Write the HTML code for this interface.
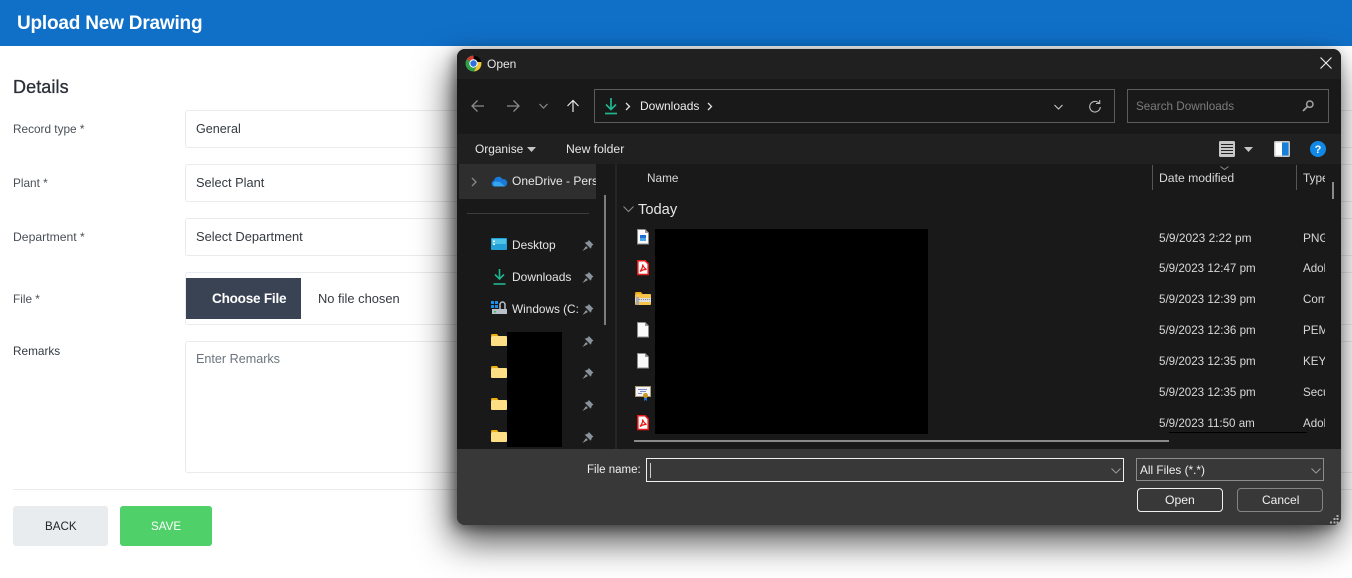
<!DOCTYPE html>
<html><head><meta charset="utf-8"><style>
html,body{margin:0;padding:0;width:1352px;height:578px;overflow:hidden;background:#fff;font-family:"Liberation Sans",sans-serif}
div,span{position:absolute;white-space:nowrap;box-sizing:border-box}
svg{position:absolute;overflow:visible}
.lb{left:13px;font-size:11.8px;color:#495057;line-height:14px}
.fd{left:185px;width:1200px;border:1px solid #e9ebee;border-radius:3px;background:#fff}
.vt{left:196px;font-size:12.8px;color:#343a40;line-height:16px}
.d{font-size:11.8px;color:#e6e6e6;line-height:16px}
.dt{left:1159px;font-size:11.6px;color:#d8d8d8;line-height:16px}
.ty{left:1303px;width:22px;overflow:hidden;font-size:11.6px;color:#d8d8d8;line-height:16px}
</style></head><body>
<div style="left:0;top:0;width:1352px;height:46px;background:#1070c8"></div>
<div style="left:17px;top:12px;font-size:19px;font-weight:bold;color:#fff;line-height:24px;letter-spacing:-.2px">Upload New Drawing</div>
<div style="left:13px;top:76px;font-size:18px;color:#2b3038;line-height:22px;-webkit-text-stroke:.3px #2b3038;letter-spacing:.1px">Details</div>

<div class="lb" style="top:122px">Record type *</div>
<div class="fd" style="top:110px;height:38px"></div><div class="vt" style="top:121px;font-size:12.6px">General</div>
<div class="lb" style="top:176px">Plant *</div>
<div class="fd" style="top:164px;height:38px"></div><div class="vt" style="top:175px">Select Plant</div>
<div class="lb" style="top:230px;font-size:12.2px">Department *</div>
<div class="fd" style="top:218px;height:38px"></div><div class="vt" style="top:229px;font-size:12.9px">Select Department</div>
<div class="lb" style="top:292px">File *</div>
<div class="fd" style="top:272px;height:53px"></div>
<div style="left:186px;top:278px;width:115px;height:41px;background:#3a4354"></div>
<div style="left:212px;top:291px;font-size:13.6px;font-weight:bold;color:#fff;line-height:16px;letter-spacing:-.25px">Choose File</div>
<div class="vt" style="left:318px;top:291px;font-size:12.9px">No file chosen</div>
<div class="lb" style="top:344px;color:#343a40">Remarks</div>
<div class="fd" style="top:341px;height:132px"></div><div class="vt" style="top:351px;color:#6c757d;font-size:12.6px">Enter Remarks</div>
<div style="left:13px;top:489px;width:1339px;height:1px;background:#e9ebee"></div>
<div style="left:13px;top:506px;width:95px;height:40px;background:#e9ecee;border-radius:3px"></div>
<div style="left:45px;top:520px;font-size:11.6px;color:#212529;line-height:14px">BACK</div>
<div style="left:120px;top:506px;width:92px;height:40px;background:#4fd069;border-radius:3px"></div>
<div style="left:151px;top:520px;font-size:11.6px;color:#fff;line-height:14px">SAVE</div>

<!-- dialog -->
<div style="left:457px;top:49px;width:884px;height:476px;border-radius:8px;background:#191919;box-shadow:-5px 16px 36px rgba(0,0,0,.7),-3px 3px 12px rgba(0,0,0,.4);overflow:hidden">
<div style="left:0;top:0;width:884px;height:30px;background:#202020"></div>
<div style="left:0;top:85px;width:884px;height:30px;background:#202020"></div>
<div style="left:0;top:400px;width:884px;height:76px;background:#383838"></div>
<div style="left:2px;top:115px;width:137px;height:35px;background:#2e2e2e"></div>
<div style="left:158px;top:115px;width:2px;height:285px;background:#252525"></div>
</div>

<!-- title -->
<svg style="left:465px;top:55px" width="17" height="17" viewBox="0 0 17 17"><circle cx="8.5" cy="8.5" r="8" fill="#2f9e44"/><path d="M1.7 4.8A8 8 0 0 1 12 1.3L8.5 5.5H4z" fill="#d83a32"/><path d="M16.2 7A8 8 0 0 1 9 16.5l3-5.5L11.5 6z" fill="#f4c430"/><path d="M8.5 .5A8 8 0 0 1 16.4 7H9z" fill="#000"/><circle cx="8.5" cy="8.5" r="4.2" fill="#fff"/><circle cx="8.5" cy="8.5" r="3.2" fill="#2f6fe0"/></svg>
<div class="d" style="left:487px;top:56px;font-size:12px">Open</div>
<svg style="left:1320px;top:57px" width="12" height="12" viewBox="0 0 12 12"><path d="M.5.5l11 11M11.5.5l-11 11" stroke="#f0f0f0" stroke-width="1.1" fill="none"/></svg>

<!-- nav -->
<svg style="left:471px;top:99px" width="100" height="14" viewBox="0 0 100 14" fill="none"><path d="M13 7H1M6.500 1.500L1 7l5.500 5.500" stroke="#8a8a8a" stroke-width="1.3"/><path d="M36 7h12M42.500 1.500L48 7l-5.500 5.500" stroke="#8a8a8a" stroke-width="1.3"/><path d="M68.500 5l4 4 4-4" stroke="#8a8a8a" stroke-width="1.2"/><path d="M102 13V1.500M96.500 7L102 1.500 107.500 7" stroke="#e8e8e8" stroke-width="1.2"/></svg>
<div style="left:594px;top:89px;width:521px;height:34px;border:1px solid #5c5c5c"></div>
<svg style="left:604px;top:98px" width="14" height="17" viewBox="0 0 14 17" fill="none"><path d="M7 0v11M2 6.500l5 5 5-5" stroke="#1fb58f" stroke-width="1.7"/><path d="M1 15.500h12" stroke="#1fb58f" stroke-width="1.700"/></svg>
<svg style="left:625px;top:102px" width="6" height="9" viewBox="0 0 6 9"><path d="M1 1l3.500 3.500L1 8" stroke="#e0e0e0" stroke-width="1.3" fill="none"/></svg>
<div class="d" style="left:640px;top:98px;color:#ededed;font-size:12px">Downloads</div>
<svg style="left:707px;top:102px" width="6" height="9" viewBox="0 0 6 9"><path d="M1 1l3.500 3.500L1 8" stroke="#e0e0e0" stroke-width="1.3" fill="none"/></svg>
<svg style="left:1054px;top:104px" width="9" height="6" viewBox="0 0 9 6"><path d="M.5 1l4 4 4-4" stroke="#d0d0d0" fill="none"/></svg>
<svg style="left:1089px;top:100px" width="12" height="13" viewBox="0 0 12 13" fill="none"><path d="M10 3.200A5.300 5.300 0 1 0 11.300 7" stroke="#bdbdbd" stroke-width="1.100"/><path d="M7 3.500h3.700V0" stroke="#bdbdbd" stroke-width="1.100"/></svg>
<div style="left:1127px;top:89px;width:202px;height:34px;border:1px solid #5c5c5c"></div>
<div class="d" style="left:1136px;top:99px;color:#7c7c7c;font-size:11.7px">Search Downloads</div>
<svg style="left:1302px;top:100px" width="12" height="12" viewBox="0 0 12 12" fill="none"><circle cx="7.800" cy="4.200" r="3.200" stroke="#a0a0a0" stroke-width="1.500"/><path d="M5.500 6.500L1 11" stroke="#a0a0a0" stroke-width="1.800"/></svg>

<!-- command bar -->
<div class="d" style="left:475px;top:141px;font-size:11.9px">Organise</div>
<svg style="left:527px;top:147px" width="9" height="5" viewBox="0 0 9 5"><path d="M0 0h9L4.500 5z" fill="#c4c4c4"/></svg>
<div class="d" style="left:566px;top:141px;font-size:12.2px">New folder</div>
<svg style="left:1219px;top:141px" width="16" height="16" viewBox="0 0 16 16"><rect width="16" height="16" rx="1.500" fill="#c8c8c8"/><path d="M2 3.500h12M2 6.500h12M2 9.500h12M2 12.500h12" stroke="#222" stroke-width="1"/></svg>
<svg style="left:1244px;top:147px" width="9" height="5" viewBox="0 0 9 5"><path d="M0 0h9L4.500 5z" fill="#c4c4c4"/></svg>
<svg style="left:1274px;top:141px" width="16" height="16" viewBox="0 0 16 16"><rect width="16" height="16" rx="1.500" fill="#c8c8c8"/><rect x="1.500" y="1.500" width="13" height="13" fill="#fff"/><rect x="8" y="1.500" width="6.500" height="13" fill="#1680d8"/></svg>
<svg style="left:1310px;top:141px" width="16" height="16" viewBox="0 0 16 16"><circle cx="8" cy="8" r="8" fill="#1288e6"/><text x="8" y="12" text-anchor="middle" font-family="Liberation Sans" font-size="11" font-weight="bold" fill="#fff">?</text></svg>

<!-- left nav -->
<svg style="left:471px;top:177px" width="6" height="10" viewBox="0 0 6 10"><path d="M1 1l4 4-4 4" stroke="#888" stroke-width="1.300" fill="none"/></svg>
<svg style="left:491px;top:175px" width="17" height="12" viewBox="0 0 17 12"><path d="M3.500 11.500A3 3 0 0 1 3 5.600 4.500 4.500 0 0 1 11.500 4.300 3.700 3.700 0 0 1 13.500 11.500z" fill="#1a7ad8"/><path d="M3.500 11.500A2.800 2.800 0 0 1 4 6.500L9 7l5 4.500z" fill="#35a6ee"/></svg>
<div style="left:512px;top:173px;width:84px;overflow:hidden;font-size:12px;color:#e6e6e6;line-height:16px">OneDrive - Personal</div>
<div style="left:467px;top:213px;width:122px;height:1px;background:#3c3c3c"></div>
<div style="left:604px;top:195px;width:2px;height:130px;background:#7d7d7d"></div>
<div style="left:1332px;top:182px;width:2px;height:17px;background:#8a8a8a"></div>

<svg style="left:491px;top:238px" width="16" height="13" viewBox="0 0 16 13"><rect width="16" height="12" rx="1" fill="#23a0d6"/><rect x="1" y="1" width="14" height="5" fill="#4fc3e8"/><rect x="2" y="2.500" width="2" height="1.500" fill="#fff"/><rect x="2" y="5.500" width="2" height="1.500" fill="#fff"/></svg>
<div class="d" style="left:512px;top:237px;font-size:11.9px">Desktop</div>
<svg style="left:493px;top:269px" width="13" height="16" viewBox="0 0 13 16" fill="none"><path d="M6.500 0v10M2 5.500l4.500 4.500L11 5.500" stroke="#1fb58f" stroke-width="1.600"/><path d="M.5 15h12" stroke="#1fb58f" stroke-width="1.600"/></svg>
<div class="d" style="left:512px;top:269px;font-size:12px">Downloads</div>
<svg style="left:491px;top:301px" width="16" height="14" viewBox="0 0 16 14"><path d="M0 0h3v3H0zM4 0h3v3H4zM0 4h3v3H0zM4 4h3v3H4z" fill="#1a8fe8"/><rect x="1" y="8" width="15" height="5" fill="#b8c0c8"/><rect x="3" y="10" width="2" height="1.500" fill="#3ec04a"/><path d="M9 8V3.500a2.500 2.500 0 0 1 5 0V8" fill="none" stroke="#b8c0c8" stroke-width="1.500"/></svg>
<div style="left:512px;top:301px;width:67px;overflow:hidden;font-size:11.8px;color:#e6e6e6;line-height:16px">Windows (C:)</div>

<svg width="0" height="0" style="left:0;top:0"><defs>
<g id="pin"><path d="M6.800 0L11.500 4.700 10 5.500 8.800 8.800 2.700 2.700 6 1.500z" fill="#8a9299"/><path d="M4 6L.5 11 6 8z" fill="#8a9299"/></g>
<g id="fol"><path d="M0 1.500Q0 0 1.500 0H6l1.500 2H0z" fill="#eeb010"/><rect y="2" width="16" height="10" rx="1" fill="#ffdf85"/></g>
<g id="doc"><path d="M.5.500h7.500l3.500 3.500v11H.5z" fill="#fafafa" stroke="#8c8c8c"/><path d="M8 .5V4h3.500" fill="#999"/></g>
<g id="pdf"><path d="M.8.800h7.400l3 3v10.700H.8z" fill="#fafafa" stroke="#e81818" stroke-width="1.500"/><path d="M3 11.500C5 9 6 6.500 5.500 4.500 6.500 7 7.500 8.500 9.500 9.500 7 9.300 5 10 3 11.500z" fill="none" stroke="#e81818" stroke-width="1.200"/></g>
</defs></svg>
<svg style="left:582px;top:240px" width="12" height="11"><use href="#pin"/></svg>
<svg style="left:582px;top:272px" width="12" height="11"><use href="#pin"/></svg>
<svg style="left:582px;top:304px" width="12" height="11"><use href="#pin"/></svg>
<svg style="left:582px;top:336px" width="12" height="11"><use href="#pin"/></svg>
<svg style="left:582px;top:368px" width="12" height="11"><use href="#pin"/></svg>
<svg style="left:582px;top:400px" width="12" height="11"><use href="#pin"/></svg>
<svg style="left:582px;top:432px" width="12" height="11"><use href="#pin"/></svg>
<svg style="left:491px;top:334px" width="16" height="12"><use href="#fol"/></svg>
<svg style="left:491px;top:366px" width="16" height="12"><use href="#fol"/></svg>
<svg style="left:491px;top:398px" width="16" height="12"><use href="#fol"/></svg>
<svg style="left:491px;top:430px" width="16" height="12"><use href="#fol"/></svg>
<div style="left:507px;top:332px;width:55px;height:115px;background:#000"></div>

<!-- list -->
<div class="d" style="left:647px;top:170px;color:#d8d8d8">Name</div>
<div style="left:1152px;top:165px;width:1px;height:25px;background:#555"></div>
<div class="dt" style="top:170px;left:1159px;font-size:12.2px">Date modified</div>
<svg style="left:1220px;top:166px" width="9" height="4" viewBox="0 0 9 4"><path d="M.5.500l4 3 4-3" stroke="#888" fill="none"/></svg>
<div style="left:1296px;top:165px;width:1px;height:25px;background:#555"></div>
<div class="ty" style="top:170px;font-size:11.8px">Type</div>
<svg style="left:623px;top:206px" width="11" height="6" viewBox="0 0 11 6"><path d="M.5.500l5 5 5-5" stroke="#8c8c8c" fill="none"/></svg>
<div style="left:638px;top:201px;font-size:14.7px;color:#e6e6e6;line-height:18px">Today</div>

<svg style="left:637px;top:229px" width="12" height="16"><use href="#doc"/><rect x="3" y="6" width="6" height="6" fill="#1f6fd0"/><rect x="3" y="9" width="6" height="3" fill="#4da8e8"/></svg>
<svg style="left:637px;top:260px" width="12" height="16"><use href="#pdf"/></svg>
<svg style="left:635px;top:292px" width="16" height="14" viewBox="0 0 16 14"><path d="M0 1.500Q0 0 1.500 0H6l1.500 2H0z" fill="#eeb010"/><rect y="2" width="16" height="11" rx="1" fill="#f7c44a"/><rect y="6" width="16" height="4" fill="#ddd"/><path d="M2 7.500h14" stroke="#888" stroke-dasharray="1 1"/><rect x="1" y="5" width="3" height="8" fill="#aaa"/></svg>
<svg style="left:637px;top:322px" width="12" height="16"><use href="#doc"/></svg>
<svg style="left:637px;top:353px" width="12" height="16"><use href="#doc"/></svg>
<svg style="left:635px;top:386px" width="16" height="15" viewBox="0 0 16 15"><rect x=".5" y=".5" width="15" height="10" fill="#f4f4f4" stroke="#a89878"/><path d="M3 3.500h9M5 5.500h6M3 7.500h4" stroke="#7c8cc8"/><path d="M9 11v4l1.500-1 1.500 1v-4z" fill="#1f6fd0"/><circle cx="10.500" cy="9.500" r="2.500" fill="#c89a20"/></svg>
<svg style="left:637px;top:415px" width="12" height="16"><use href="#pdf"/></svg>
<div style="left:655px;top:229px;width:273px;height:205px;background:#000"></div>

<div class="dt" style="top:230px;font-size:11.9px">5/9/2023 2:22 pm</div><div class="ty" style="top:230px;font-size:11.9px">PNG</div>
<div class="dt" style="top:261px">5/9/2023 12:47 pm</div><div class="ty" style="top:261px">Adobe</div>
<div class="dt" style="top:292px">5/9/2023 12:39 pm</div><div class="ty" style="top:292px">Com</div>
<div class="dt" style="top:323px">5/9/2023 12:36 pm</div><div class="ty" style="top:323px">PEM</div>
<div class="dt" style="top:354px">5/9/2023 12:35 pm</div><div class="ty" style="top:354px">KEY</div>
<div class="dt" style="top:385px">5/9/2023 12:35 pm</div><div class="ty" style="top:385px">Secur</div>
<div class="dt" style="top:416px">5/9/2023 11:50 am</div><div class="ty" style="top:416px">Adobe</div>
<div style="left:1169px;top:432px;width:138px;height:1px;background:#000"></div>
<div style="left:634px;top:440px;width:535px;height:2px;background:#8a8a8a"></div>

<!-- bottom -->
<div class="d" style="left:587px;top:462px;color:#f0f0f0;font-size:11.5px">File name:</div>
<div style="left:646px;top:458px;width:478px;height:24px;border:1px solid #f0f0f0"></div>
<div style="left:650px;top:463px;width:1px;height:15px;background:#ccc"></div>
<svg style="left:1111px;top:468px" width="10" height="6" viewBox="0 0 10 6"><path d="M.5.500l4.500 4.500L9.500.5" stroke="#9a9a9a" fill="none"/></svg>
<div style="left:1136px;top:458px;width:188px;height:23px;border:1px solid #8c8c8c"></div>
<div class="d" style="left:1140px;top:462px;color:#f0f0f0;font-size:11.8px">All Files (*.*)</div>
<svg style="left:1311px;top:468px" width="10" height="6" viewBox="0 0 10 6"><path d="M.5.500l4.500 4.500L9.500.5" stroke="#9a9a9a" fill="none"/></svg>
<div style="left:1137px;top:488px;width:86px;height:24px;border:1px solid #f0f0f0;border-radius:4px"></div>
<div class="d" style="left:1165px;top:492px;color:#f0f0f0;font-size:12.2px">Open</div>
<div style="left:1237px;top:488px;width:86px;height:24px;border:1px solid #858585;border-radius:4px"></div>
<div class="d" style="left:1262px;top:492px;color:#f0f0f0;font-size:12px">Cancel</div>
<svg style="left:1330px;top:515px" width="9" height="9" viewBox="0 0 9 9"><path d="M6.500 0h2v2h-2zM3.500 3h2v2h-2zM6.500 3h2v2h-2zM0 6.500h2v2H0zM3.500 6.500h2v2h-2zM6.500 6.500h2v2h-2z" fill="#b0b0b0"/></svg>
</body></html>
